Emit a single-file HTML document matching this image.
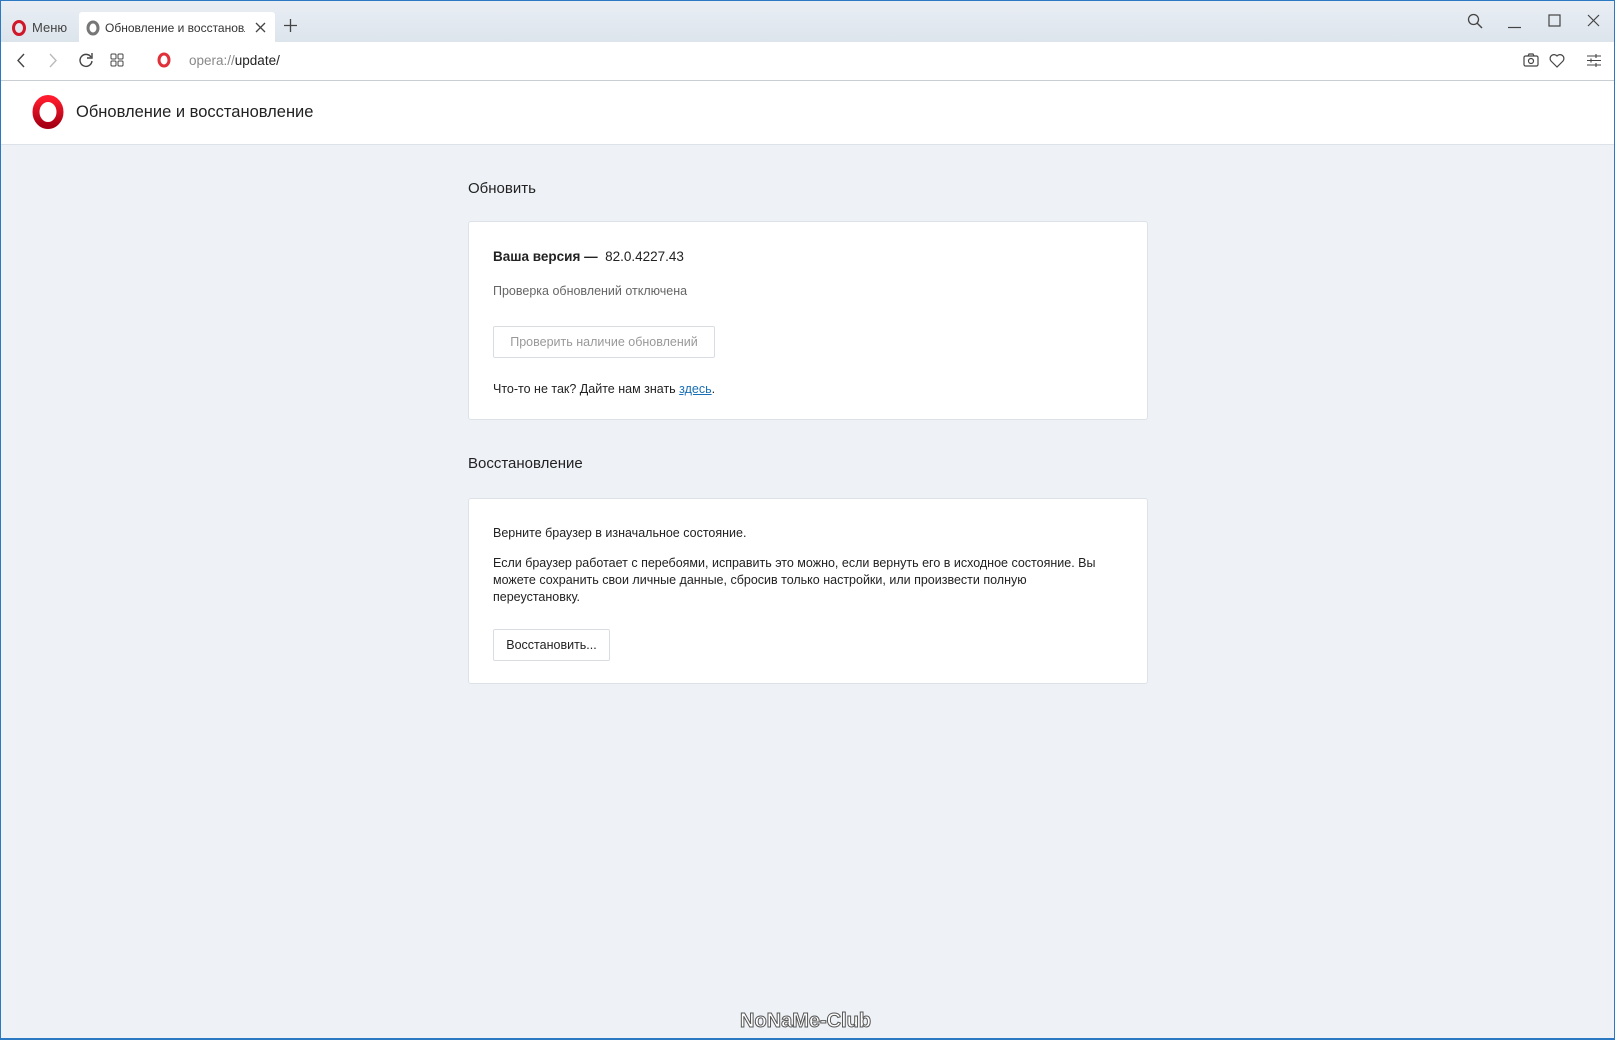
<!DOCTYPE html>
<html><head><meta charset="utf-8"><style>
*{margin:0;padding:0;box-sizing:border-box}
body{width:1615px;height:1040px;overflow:hidden;font-family:"Liberation Sans","Noto Sans CJK SC",sans-serif;background:#eef2f7;position:relative;color:#222}
.win{position:absolute;left:0;top:0;width:1615px;height:1040px;border:1px solid #2b79c2;border-bottom:2px solid #2b79c2}
.tabbar{position:absolute;left:1px;top:1px;right:1px;height:42px;background:linear-gradient(#e9eef4,#dce4ec)}
.tab{position:absolute;top:11px;height:31px;font-size:13px;color:#333;display:flex;align-items:center}
.addr{position:absolute;left:1px;right:1px;top:42px;height:39px;background:#fff;border-bottom:1px solid #c9ced4}
.hdr{position:absolute;left:1px;right:1px;top:81px;height:64px;background:#fff;border-bottom:1px solid #dde2e8}
.h2{position:absolute;left:468px;font-size:15px;color:#222}
.card{position:absolute;left:468px;width:680px;background:#fff;border:1px solid #dde2e8;border-radius:3px}
.t{position:absolute;left:24px;font-size:12.5px;color:#222;white-space:nowrap}
.btn{position:absolute;left:24px;border:1px solid #d9dde2;border-radius:2px;font-size:12.5px;display:flex;align-items:center;justify-content:center;background:#fff}
svg{position:absolute}
</style></head><body>
<div class="win"></div>
<div class="tabbar">
 <div class="tab" style="left:8px;width:68px;">
  <svg style="left:3px;top:8px" width="14" height="16" viewBox="0 0 14 16"><ellipse cx="7" cy="8" rx="5.5" ry="6.5" fill="none" stroke="#d0182a" stroke-width="3"/></svg>
  <span style="position:absolute;left:23px;color:#444">Меню</span></div>
 <div class="tab" style="left:78px;width:196px;background:#fff;border-radius:3px 3px 0 0">
  <svg style="left:7px;top:8px" width="14" height="16" viewBox="0 0 14 16"><ellipse cx="7" cy="8" rx="5" ry="6" fill="none" stroke="#777" stroke-width="3"/></svg>
  <span style="position:absolute;left:26px;width:140px;overflow:hidden;white-space:nowrap;font-size:12px">Обновление и восстановление</span>
  <svg style="left:176px;top:10px" width="11" height="11" viewBox="0 0 11 11"><path d="M1 1L10 10M10 1L1 10" stroke="#444" stroke-width="1.3"/></svg></div>
 <svg style="left:283px;top:18px" width="13" height="13" viewBox="0 0 13 13"><path d="M6.5 0V13M0 6.5H13" stroke="#444" stroke-width="1.3"/></svg>
 <svg style="left:1466px;top:12px" width="16" height="16" viewBox="0 0 16 16"><circle cx="6.5" cy="6.5" r="5" fill="none" stroke="#444" stroke-width="1.3"/><path d="M10 10L15 15" stroke="#444" stroke-width="1.4"/></svg>
 <svg style="left:1507px;top:12px" width="14" height="16"><path d="M0 14.5H13" stroke="#444" stroke-width="1.2"/></svg>
 <svg style="left:1547px;top:13px" width="14" height="14"><rect x="1" y="1" width="11" height="11" fill="none" stroke="#444" stroke-width="1.2"/></svg>
 <svg style="left:1586px;top:13px" width="14" height="14"><path d="M1 1L12 12M12 1L1 12" stroke="#444" stroke-width="1.2"/></svg>
</div>
<div class="addr">
 <svg style="left:15px;top:11px" width="10" height="16"><path d="M8 1L2 7.5L8 14" fill="none" stroke="#444" stroke-width="1.4"/></svg>
 <svg style="left:47px;top:11px" width="10" height="16"><path d="M2 1L8 7.5L2 14" fill="none" stroke="#bbb" stroke-width="1.4"/></svg>
 <svg style="left:77px;top:10px" width="16" height="16" viewBox="0 0 16 16"><path d="M13 5A6 6 0 1 0 14 9" fill="none" stroke="#444" stroke-width="1.4"/><path d="M14 1V6H9" fill="none" stroke="#444" stroke-width="1.4"/></svg>
 <svg style="left:109px;top:11px" width="14" height="14"><rect x="1" y="1" width="5" height="5" rx="1" fill="none" stroke="#444"/><rect x="8" y="1" width="5" height="5" rx="1" fill="none" stroke="#444"/><rect x="1" y="8" width="5" height="5" rx="1" fill="none" stroke="#444"/><rect x="8" y="8" width="5" height="5" rx="1" fill="none" stroke="#444"/></svg>
 <svg style="left:156px;top:10px" width="14" height="16" viewBox="0 0 14 16"><ellipse cx="7" cy="8" rx="5" ry="6" fill="none" stroke="#e0303a" stroke-width="3"/></svg>
 <div style="position:absolute;left:188px;top:11px;font-size:13.5px;color:#888">opera://<span style="color:#222">update/</span></div>
 <svg style="left:1522px;top:11px" width="16" height="15"><rect x="1" y="3" width="14" height="10" rx="1.5" fill="none" stroke="#444" stroke-width="1.2"/><path d="M5 3L6 1H10L11 3" fill="none" stroke="#444" stroke-width="1.2"/><circle cx="8" cy="8" r="2.5" fill="none" stroke="#444" stroke-width="1.2"/></svg>
 <svg style="left:1548px;top:11px" width="16" height="15" viewBox="0 0 16 15"><path d="M8 14L2 8A3.5 3.5 0 0 1 8 3A3.5 3.5 0 0 1 14 8Z" fill="none" stroke="#444" stroke-width="1.2"/></svg>
 <svg style="left:1586px;top:12px" width="14" height="13"><path d="M0 2H14M0 6.5H14M0 11H14" stroke="#444" stroke-width="1.1"/><path d="M9 0V4M4 4.5V8.5M9 9V13" stroke="#444" stroke-width="1.1"/></svg>
</div>
<div class="hdr">
 <svg style="left:30px;top:14px" width="34" height="34" viewBox="0 0 34 34"><defs><linearGradient id="g" x1="0" y1="0" x2="0" y2="1"><stop offset="0" stop-color="#ff1b2d"/><stop offset="1" stop-color="#a70014"/></linearGradient></defs><ellipse cx="17" cy="17" rx="12" ry="13.5" fill="none" stroke="url(#g)" stroke-width="7"/></svg>
 <div style="position:absolute;left:75px;top:22px;font-size:16.5px;color:#222">Обновление и восстановление</div>
</div>
<div class="h2" style="top:180px">Обновить</div>
<div class="card" style="top:221px;height:199px">
 <div class="t" style="top:27px;font-size:13.5px;font-weight:bold;color:#222">Ваша версия —&nbsp; <span style="font-weight:normal">82.0.4227.43</span></div>
 <div class="t" style="top:62px;color:#666">Проверка обновлений отключена</div>
 <div class="btn" style="top:104px;width:222px;height:32px;color:#999">Проверить наличие обновлений</div>
 <div class="t" style="top:160px">Что-то не так? Дайте нам знать <span style="color:#1a6fb5;text-decoration:underline">здесь</span>.</div>
</div>
<div class="h2" style="top:455px">Восстановление</div>
<div class="card" style="top:498px;height:186px">
 <div class="t" style="top:27px">Верните браузер в изначальное состояние.</div>
 <div class="t" style="top:56px;white-space:normal;width:615px;line-height:17px">Если браузер работает с перебоями, исправить это можно, если вернуть его в исходное состояние. Вы можете сохранить свои личные данные, сбросив только настройки, или произвести полную переустановку.</div>
 <div class="btn" style="top:130px;width:117px;height:32px;color:#222">Восстановить...</div>
</div>
<div style="position:absolute;left:740px;top:1010px;font-size:20px;font-weight:bold;color:#fff;-webkit-text-stroke:1px #555">NoNaMe-Club</div>
</body></html>
